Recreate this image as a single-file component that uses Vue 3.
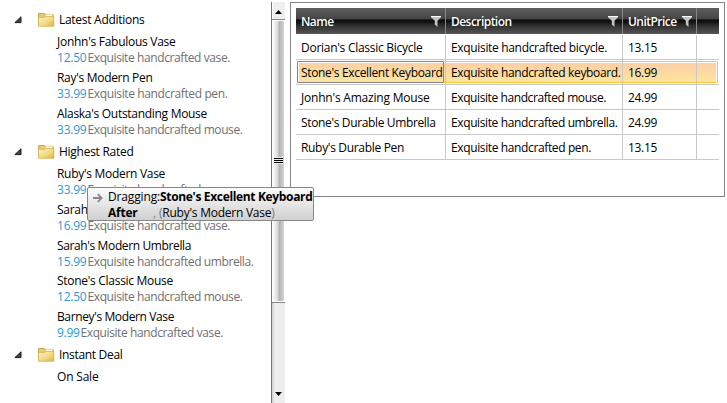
<script setup>
const groups = [
  {
    title: 'Latest Additions', w: 85.5, cls: 'first',
    items: [
      { name: "Jonhn's Fabulous Vase", w: 118.5, price: '12.50', text: 'Exquisite handcrafted vase.', tw: 142.5 },
      { name: "Ray's Modern Pen", w: 95.5, price: '33.99', text: 'Exquisite handcrafted pen.', tw: 140 },
      { name: "Alaska's Outstanding Mouse", w: 150, price: '33.99', text: 'Exquisite handcrafted mouse.', tw: 155 }
    ]
  },
  {
    title: 'Highest Rated', w: 74.5, cls: 'second',
    items: [
      { name: "Ruby's Modern Vase", w: 108, price: '33.99', text: 'Exquisite handcrafted vase.', tw: 142.5 },
      { name: "Sarah's Modern Vase", w: 112, price: '16.99', text: 'Exquisite handcrafted vase.', tw: 142.5 },
      { name: "Sarah's Modern Umbrella", w: 134, price: '15.99', text: 'Exquisite handcrafted umbrella.', tw: 166 },
      { name: "Stone's Classic Mouse", w: 116, price: '12.50', text: 'Exquisite handcrafted mouse.', tw: 155 },
      { name: "Barney's Modern Vase", w: 117, price: '9.99', text: 'Exquisite handcrafted vase.', tw: 142.5 }
    ]
  },
  { title: 'Instant Deal', w: 63.5, cls: 'third', items: [{ name: 'On Sale', w: 41.5 }] }
]

const columns = [
  { title: 'Name', w: 32.5 },
  { title: 'Description', w: 60.5 },
  { title: 'UnitPrice', w: 48.5 }
]

const rows = [
  { name: "Dorian's Classic Bicycle", w: 121.5, text: 'Exquisite handcrafted bicycle.', tw: 156 },
  { name: "Stone's Excellent Keyboard", w: 141.5, text: 'Exquisite handcrafted keyboard.', tw: 169.5, selected: true },
  { name: "Jonhn's Amazing Mouse", w: 128.5, text: 'Exquisite handcrafted mouse.', tw: 155 },
  { name: "Stone's Durable Umbrella", w: 134.5, text: 'Exquisite handcrafted umbrella.', tw: 166.5 },
  { name: "Ruby's Durable Pen", w: 103, text: 'Exquisite handcrafted pen.', tw: 140 }
]
const prices = ['13.15', '16.99', '24.99', '24.99', '13.15']

// Tracks a label so that it takes the given width.
const vFit = {
  mounted(el, { value }) {
    const natural = el.getBoundingClientRect().width
    el.style.letterSpacing = (value - natural) / el.textContent.length + 'px'
  }
}
</script>

<template>
  <main class="page">
    <section class="tree">
      <div class="nodes">
        <div v-for="g in groups" :key="g.title" :class="['group', g.cls]">
          <div class="head">
            <svg class="expander" width="8" height="8" viewBox="0 0 8 8"><path d="M7 .8V6.6H.9Z" fill="#444" stroke="#1c1c1c" /></svg>
            <svg class="folder" width="17" height="15" viewBox="0 0 17 15">
              <defs>
                <linearGradient id="fold" x1="0" y1="0" x2="1" y2="1">
                  <stop offset="0" stop-color="#fbf1bf" /><stop offset=".55" stop-color="#f1db84" /><stop offset="1" stop-color="#dcb443" />
                </linearGradient>
              </defs>
              <path d="M.5 1.5H6.5L7.5 3H15.5V13.5H.5Z" fill="#e5cb76" stroke="#c9a850" />
              <path d="M7.5 2.2H14.8V5H7.5Z" fill="#fffbe6" stroke="#d6bd6a" stroke-width=".6" />
              <path d="M.5 5.5H6.3L7.5 4.5H15.8V14.3H.5Z" fill="url(#fold)" stroke="#d6b558" stroke-width=".8" />
            </svg>
            <span class="title"><span v-fit="g.w">{{ g.title }}</span></span>
          </div>
          <div v-for="i in g.items" :key="i.name" class="item">
            <div class="line"><span v-fit="i.w">{{ i.name }}</span></div>
            <div v-if="i.price" class="line">
              <span v-fit="i.price.length * 6 - (i.price.length > 4 ? 0.5 : 1.5)" class="price">{{ i.price }}</span>
              <span v-fit="i.tw" class="desc">{{ i.text }}</span>
            </div>
          </div>
        </div>
      </div>
      <div class="scrollbar">
        <div class="up"><svg width="7" height="4" viewBox="0 0 7 4"><path d="M3.5 0L7 4H0Z" /></svg></div>
        <div class="thumb"><div class="grip"><i /><i /><i /></div></div>
        <div class="track"><svg width="7" height="4" viewBox="0 0 7 4"><path d="M0 0H7L3.5 4Z" /></svg></div>
      </div>
    </section>

    <section class="panel">
      <div class="row header">
        <div v-for="c in columns" :key="c.title" class="cell">
          <span v-fit="c.w">{{ c.title }}</span>
          <svg class="filter" width="10" height="11" viewBox="0 0 10 11">
            <path d="M0 0H10V1.2L6.5 4.8V11L3.8 8.6V4.8L0 1.2Z" fill="#c4c4c4" /><path d="M0 .5H10" stroke="#fff" />
          </svg>
        </div>
        <div class="cell" />
      </div>
      <div v-for="(r, n) in rows" :key="r.name" :class="['row', { selected: r.selected }]">
        <div class="cell"><span v-fit="r.w">{{ r.name }}</span></div>
        <div class="cell"><span v-fit="r.tw">{{ r.text }}</span></div>
        <div class="cell"><span v-fit="29">{{ prices[n] }}</span></div>
        <div class="cell" />
      </div>
    </section>

    <div class="drag">
      <svg class="arrow" width="10" height="10" viewBox="0 0 10 10"><path d="M0 5H8M4.8 1.2L8.6 5L4.8 8.8" fill="none" stroke="#888" stroke-width="1.8" /></svg>
      <div>
        <div class="line"><span v-fit="52">Dragging:</span><b v-fit="152.5">Stone's Excellent Keyboard</b></div>
        <div class="line"><b v-fit="29.5" class="after">After</b><span class="comma">,</span><span v-fit="115.5"><span class="paren">(</span>Ruby's Modern Vase<span class="paren">)</span></span></div>
      </div>
    </div>
  </main>
</template>

<style>
body { margin: 0; background: #fff; }
</style>

<style scoped>
.page {
  position: relative;
  display: flex;
  box-sizing: border-box;
  width: 727px;
  height: 403px;
  padding-top: 2px;
  overflow: hidden;
  font: 12px/16px "Segoe UI", "Open Sans", "Noto Sans", sans-serif;
  color: #000;
  white-space: nowrap;
}
.page span, .page b { flex: none; }
.tree { display: flex; width: 285px; height: 401px; margin-right: 5px; }
.nodes { width: 271px; padding-top: 6px; }
.head { display: flex; align-items: center; height: 24px; padding-left: 14px; }
.expander { margin-right: 16px; }
.folder { margin-right: 3px; margin-top: -1px; }
.title { display: flex; padding-left: 1px; }
.item { box-sizing: border-box; height: 36px; padding: 2px 0 0 57px; }
.second .item { height: 35.8px; }
.line { display: flex; height: 16px; }
.price { color: #2a9ad6; margin-right: 1px; }
.desc { color: #707070; }

.scrollbar {
  display: flex;
  flex-direction: column;
  box-sizing: border-box;
  width: 14px;
  border-left: 1px solid #777;
  background: #efefef;
}
.up { display: flex; align-items: center; justify-content: center; height: 17px; border-bottom: 1px solid #858585; box-shadow: inset 1px 0 #fff; }
.up svg { margin-top: 2px; }
.thumb {
  display: flex;
  align-items: flex-start;
  justify-content: center;
  box-sizing: border-box;
  height: 282px;
  border: 1px solid #fff;
  padding-top: 136px;
  background: linear-gradient(90deg, #fafafa 0, #e5e5e5 30%, #d0d0d0 48%, #b2b2b2 55%, #c4c4c4 80%, #d5d5d5 100%);
}
.grip { display: grid; gap: 1px; width: 9px; padding: 1px 0; background: #eee; }
.grip i { height: 1px; background: #000; }
.track {
  display: flex;
  flex: 1;
  align-items: flex-end;
  justify-content: center;
  border-top: 1px solid #858585;
  padding-bottom: 7px;
  background: linear-gradient(90deg, #cfcfcf, #eee 3px);
}

.panel { box-sizing: border-box; width: 435px; height: 195px; padding: 5px; border: 1px solid #848484; }
.row { display: grid; grid-template-columns: 150px 177px 74px 22px; height: 25px; }
.cell {
  display: flex;
  align-items: center;
  justify-content: space-between;
  box-sizing: border-box;
  padding: 2px 0 0 5px;
  border-right: 1px solid #c8c8c8;
  border-bottom: 1px solid #c8c8c8;
}
.cell:last-child { border-right: 0; }
.header {
  height: 26px;
  margin-bottom: 1px;
  color: #fff;
  font-weight: 600;
  background: linear-gradient(#5e5e5e 0, #454545 42%, #151515 45%, #0c0c0c 50%, #303030 68%, #565656 100%);
}
.header .cell { padding-right: 4px; border-bottom: 0; border-right-color: #888; }
.filter { flex: none; margin-top: -2px; }
.selected { position: relative; background: linear-gradient(#fdd0a4, #fde49f) 3px 3px / 417px 19px no-repeat; }
.selected::before {
  content: "";
  position: absolute;
  inset: 1px 1px 2px;
  border: 1px solid #fcc63c;
  border-radius: 1px;
}
.selected::after {
  content: "";
  position: absolute;
  left: 1px;
  top: 1px;
  width: 145px;
  height: 20px;
  border: 1px solid #858585;
  border-radius: 1px;
}

.drag {
  position: absolute;
  left: 87px;
  top: 187px;
  display: flex;
  box-sizing: border-box;
  width: 227px;
  height: 34px;
  padding: 1px 0 0 5px;
  border: 1px solid #878787;
  border-radius: 2px;
  background: linear-gradient(#fcfcfc, #d0d0d0);
}
.drag b { font-weight: 700; }
.arrow { flex: none; margin: 4px 5px 0 0; }
.after { margin-right: 15.5px; }
.comma { width: 6px; color: #888; }
.paren { color: #777; }
</style>
